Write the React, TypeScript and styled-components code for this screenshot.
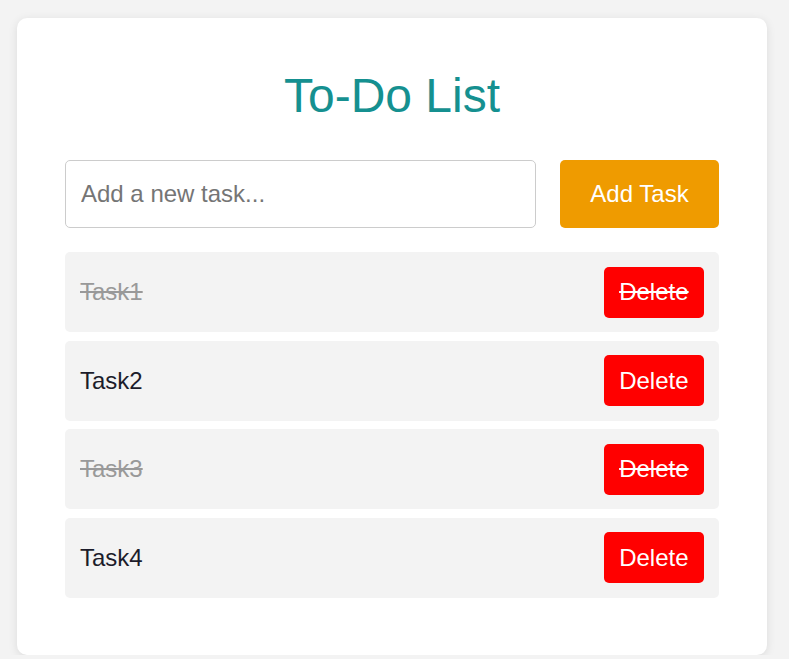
import React, { useState } from "react";
import styled, { createGlobalStyle } from "styled-components";

const GlobalStyle = createGlobalStyle`
  * { box-sizing: border-box; }
  html, body { margin: 0; padding: 0; }
  body {
    background: #f3f3f3;
    font-family: "Liberation Sans", Arial, sans-serif;
    padding: 18px 0 0 17px;
  }
`;

const Card = styled.div`
  width: 750px;
  background: #ffffff;
  border-radius: 10px;
  box-shadow: 0 2px 10px rgba(0, 0, 0, 0.1);
  padding: 50px 48px 57px;
`;

const Title = styled.h1`
  margin: 0 0 37px;
  text-align: center;
  font-size: 48px;
  font-weight: 400;
  line-height: 55px;
  color: #159090;
`;

const InputRow = styled.div`
  display: flex;
  gap: 24px;
  margin-bottom: 24px;
`;

const TaskInput = styled.input`
  flex: 1;
  height: 68px;
  padding: 0 15px;
  font-size: 24px;
  font-family: inherit;
  border: 1px solid #cccccc;
  border-radius: 5px;
  color: #222;
  outline: none;
  &::placeholder { color: #757575; }
`;

const AddButton = styled.button`
  width: 159px;
  height: 68px;
  border: none;
  border-radius: 5px;
  background: #ef9b00;
  color: #ffffff;
  font-size: 24px;
  font-family: inherit;
  cursor: pointer;
`;

const List = styled.ul`
  list-style: none;
  margin: 0;
  padding: 0;
  display: flex;
  flex-direction: column;
  gap: 8.3px;
`;

const Row = styled.li<{ $done: boolean }>`
  display: flex;
  align-items: center;
  justify-content: space-between;
  height: 80.3px;
  padding: 0 15px;
  background: #f3f3f3;
  border-radius: 5px;
  font-size: 24px;
  color: ${(p) => (p.$done ? "#999999" : "#1c1c2a")};
  text-decoration: ${(p) => (p.$done ? "line-through" : "none")};
`;

const TaskText = styled.span`
  cursor: pointer;
`;

const DeleteButton = styled.button`
  height: 51px;
  padding: 0 15.5px;
  border: none;
  border-radius: 5px;
  background: #ff0000;
  color: #ffffff;
  font-size: 24px;
  font-family: inherit;
  text-decoration: inherit;
  cursor: pointer;
`;

type Task = { id: number; text: string; done: boolean };

export default function App() {
  const [tasks, setTasks] = useState<Task[]>([
    { id: 1, text: "Task1", done: true },
    { id: 2, text: "Task2", done: false },
    { id: 3, text: "Task3", done: true },
    { id: 4, text: "Task4", done: false },
  ]);
  const [value, setValue] = useState("");

  const add = () => {
    if (!value.trim()) return;
    setTasks((t) => [...t, { id: Date.now(), text: value.trim(), done: false }]);
    setValue("");
  };

  return (
    <>
      <GlobalStyle />
      <Card>
        <Title>To-Do List</Title>
        <InputRow>
          <TaskInput
            placeholder="Add a new task..."
            value={value}
            onChange={(e) => setValue(e.target.value)}
          />
          <AddButton onClick={add}>Add Task</AddButton>
        </InputRow>
        <List>
          {tasks.map((t) => (
            <Row key={t.id} $done={t.done}>
              <TaskText
                onClick={() =>
                  setTasks((ts) => ts.map((x) => (x.id === t.id ? { ...x, done: !x.done } : x)))
                }
              >
                {t.text}
              </TaskText>
              <DeleteButton onClick={() => setTasks((ts) => ts.filter((x) => x.id !== t.id))}>
                Delete
              </DeleteButton>
            </Row>
          ))}
        </List>
      </Card>
    </>
  );
}
